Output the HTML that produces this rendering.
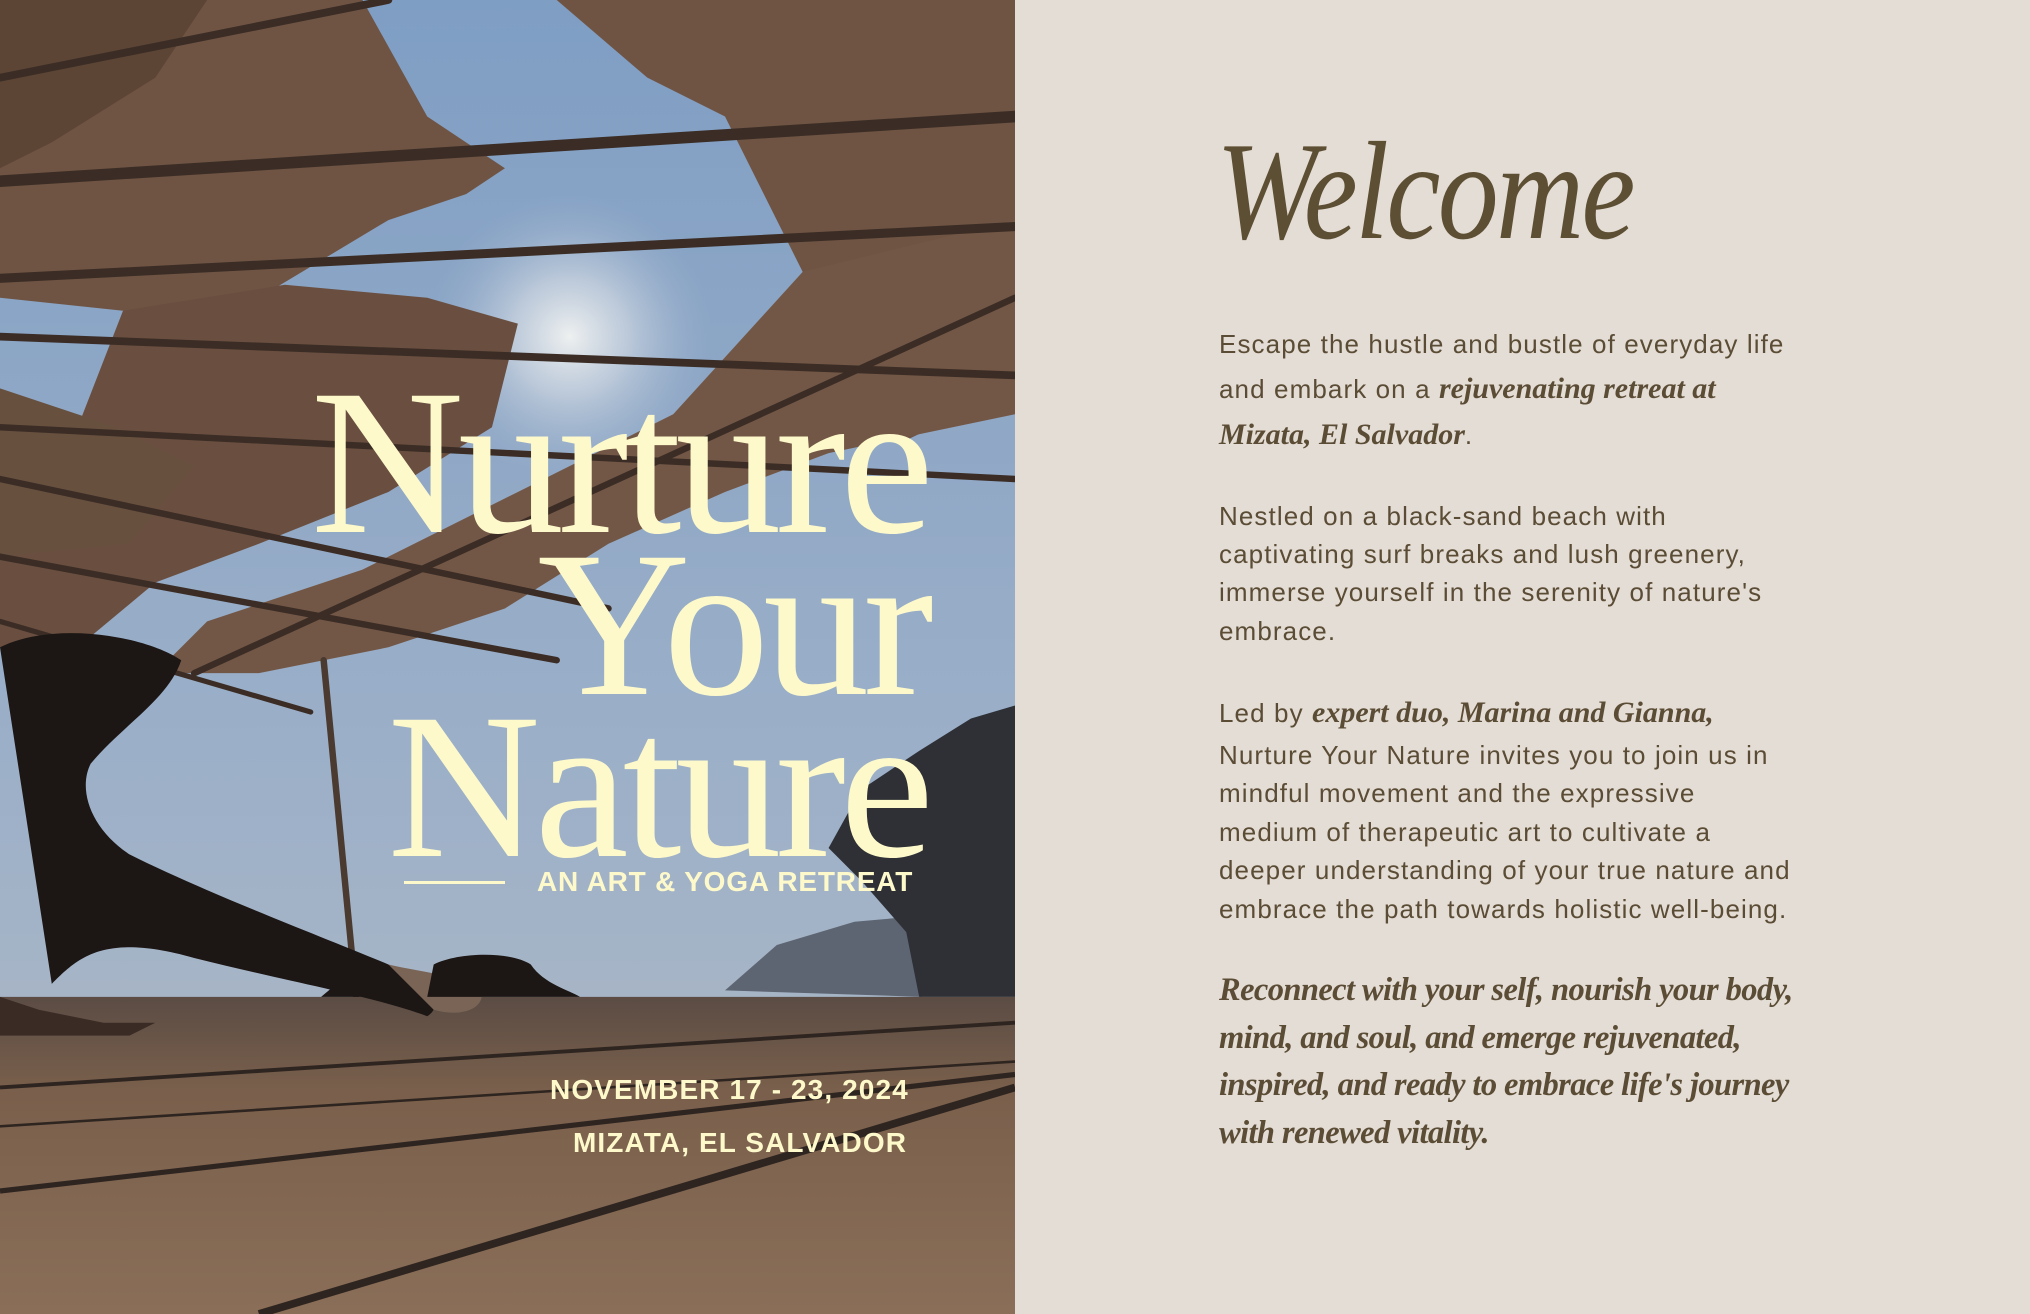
<!DOCTYPE html>
<html><head><meta charset="utf-8"><style>
html,body{margin:0;padding:0}
body{width:2030px;height:1314px;position:relative;overflow:hidden;background:#e4ddd5}
.ph{position:absolute;left:0;top:0;width:1015px;height:1314px}
.t{position:absolute;white-space:nowrap;color:#fdf9cb}
.big{font-family:"Liberation Serif",serif;font-size:208px;line-height:1;right:1102px;transform:scaleX(1.02);transform-origin:right bottom;letter-spacing:-6px}
.cap{font-family:"Liberation Sans",sans-serif;font-weight:bold;font-size:28px;line-height:30px;letter-spacing:1.1px}
.r{position:absolute;left:1219px;white-space:nowrap;color:#5b4c35;font-family:"Liberation Sans",sans-serif;font-size:26px;line-height:40px;letter-spacing:1.1px}
.r i,.q{font-family:"Liberation Serif",serif;font-style:italic;font-weight:bold;font-size:30px;letter-spacing:0px}
.q{font-size:32.5px;letter-spacing:-0.6px}
.w{position:absolute;left:1216px;top:122px;font-family:"Liberation Serif",serif;font-style:italic;font-size:140px;color:#5d4f33;line-height:1;letter-spacing:-3px;transform:scaleX(0.87);transform-origin:left top}
</style></head><body>
<svg class="ph" viewBox="0 0 784 1015" preserveAspectRatio="none">
<defs>
<linearGradient id="sky" x1="0" y1="0" x2="0" y2="1"><stop offset="0" stop-color="#7f9ec4"/><stop offset="0.6" stop-color="#9db0c8"/><stop offset="1" stop-color="#b4bcc4"/></linearGradient>
<radialGradient id="sun" cx="440" cy="260" r="110" gradientUnits="userSpaceOnUse"><stop offset="0" stop-color="#eef0f0"/><stop offset="0.4" stop-color="#c9d3df" stop-opacity=".8"/><stop offset="1" stop-color="#9cb2cc" stop-opacity="0"/></radialGradient>
<linearGradient id="fl" x1="0" y1="0" x2="0" y2="1"><stop offset="0" stop-color="#5b4c44"/><stop offset="0.3" stop-color="#7a604c"/><stop offset="1" stop-color="#8a6e58"/></linearGradient>
</defs>
<rect width="784" height="1015" fill="url(#sky)"/>
<rect width="784" height="1015" fill="url(#sun)"/>
<g fill="#6f5444">
<path d="M0 0H280L330 90 390 130 360 150 300 170 200 230 95 240 0 230Z"/>
<path d="M430 0H784V300L700 340 620 210 560 90 500 60Z"/>
<path d="M95 240L220 220 330 230 400 250 380 330 300 380 200 420 120 450 60 500 0 500 0 420 80 400 60 330Z" fill="#6a4f40"/>
<path d="M620 210L784 170V320L640 350 560 380 470 420 390 470 300 500 200 520 120 520 160 480 280 440 400 380 520 320Z" fill="#735746"/>
<path d="M0 300L90 330 150 360 100 420 0 430Z" fill="#68503f"/>
</g>
<path d="M0 0H160L120 60 40 110 0 130Z" fill="#5d4536"/>
<g stroke="#3b2d25" stroke-linecap="round" fill="none">
<path d="M0 140L784 90" stroke-width="9"/>
<path d="M0 215L784 175" stroke-width="7"/>
<path d="M0 260L784 290" stroke-width="6"/>
<path d="M0 330L784 370" stroke-width="5"/>
<path d="M0 370L470 470" stroke-width="5"/>
<path d="M0 430L430 510" stroke-width="5"/>
<path d="M0 480L240 550" stroke-width="4"/>
<path d="M150 520L784 230" stroke-width="5"/>
<path d="M250 510L275 770" stroke-width="5" stroke="#4a3a30"/>
<path d="M0 60L300 0" stroke-width="6"/>
</g>
<path d="M560 765L600 730 660 712 705 708 712 770Z" fill="#5d6572"/>
<path d="M640 655L665 610 710 580 750 555 784 545V770H710L700 720 665 680Z" fill="#2e3036"/>
<path d="M0 770H784V1015H0Z" fill="url(#fl)"/>
<g stroke="#2f2520" fill="none">
<path d="M0 840L784 790" stroke-width="3"/>
<path d="M0 870L784 820" stroke-width="2"/>
<path d="M0 920L784 830" stroke-width="4"/>
<path d="M200 1015L784 840" stroke-width="6"/>
</g>
<g fill="#1c1614">
<path d="M0 500C40 480 110 490 140 510 130 540 95 560 70 590 60 610 70 640 100 660 160 690 240 720 300 745 330 760 345 775 330 785 290 770 230 760 150 740 80 720 60 740 40 760 0 770Z"/>
<path d="M0 770L30 780 80 790 120 790 100 800 0 800Z" fill="#3a2c25"/>
<path d="M300 745C320 750 350 752 372 765 375 780 355 786 335 780Z" fill="#7a6456"/>
<path d="M335 745C355 735 395 735 410 745 420 760 440 765 448 770H330Z"/>
<path d="M248 770L260 760 288 762 290 770Z"/>
</g>
</svg>
<div class="t big" style="top:358px">Nurture</div>
<div class="t big" style="top:520px">Your</div>
<div class="t big" style="top:682px">Nature</div>
<div style="position:absolute;left:404px;top:881px;width:101px;height:3px;background:#fdf9cb"></div>
<div class="t cap" style="left:537px;top:867px;letter-spacing:0.8px">AN ART &amp; YOGA RETREAT</div>
<div class="t cap" style="left:550px;top:1075px">NOVEMBER 17 - 23, 2024</div>
<div class="t cap" style="left:573px;top:1128px">MIZATA, EL SALVADOR</div>

<div class="w">Welcome</div>
<div class="r" style="top:324px">Escape the hustle and bustle of everyday life</div>
<div class="r" style="top:369px">and embark on a <i>rejuvenating retreat at</i></div>
<div class="r" style="top:415px"><i>Mizata, El Salvador</i>.</div>
<div class="r" style="top:496px">Nestled on a black-sand beach with</div>
<div class="r" style="top:534px">captivating surf breaks and lush greenery,</div>
<div class="r" style="top:572px">immerse yourself in the serenity of nature's</div>
<div class="r" style="top:611px">embrace.</div>
<div class="r" style="top:693px">Led by <i>expert duo, Marina and Gianna,</i></div>
<div class="r" style="top:735px">Nurture Your Nature invites you to join us in</div>
<div class="r" style="top:773px">mindful movement and the expressive</div>
<div class="r" style="top:812px">medium of therapeutic art to cultivate a</div>
<div class="r" style="top:850px">deeper understanding of your true nature and</div>
<div class="r" style="top:889px">embrace the path towards holistic well-being.</div>
<div class="r q" style="top:970px">Reconnect with your self, nourish your body,</div>
<div class="r q" style="top:1018px">mind, and soul, and emerge rejuvenated,</div>
<div class="r q" style="top:1065px">inspired, and ready to embrace life's journey</div>
<div class="r q" style="top:1113px">with renewed vitality.</div>
</body></html>
